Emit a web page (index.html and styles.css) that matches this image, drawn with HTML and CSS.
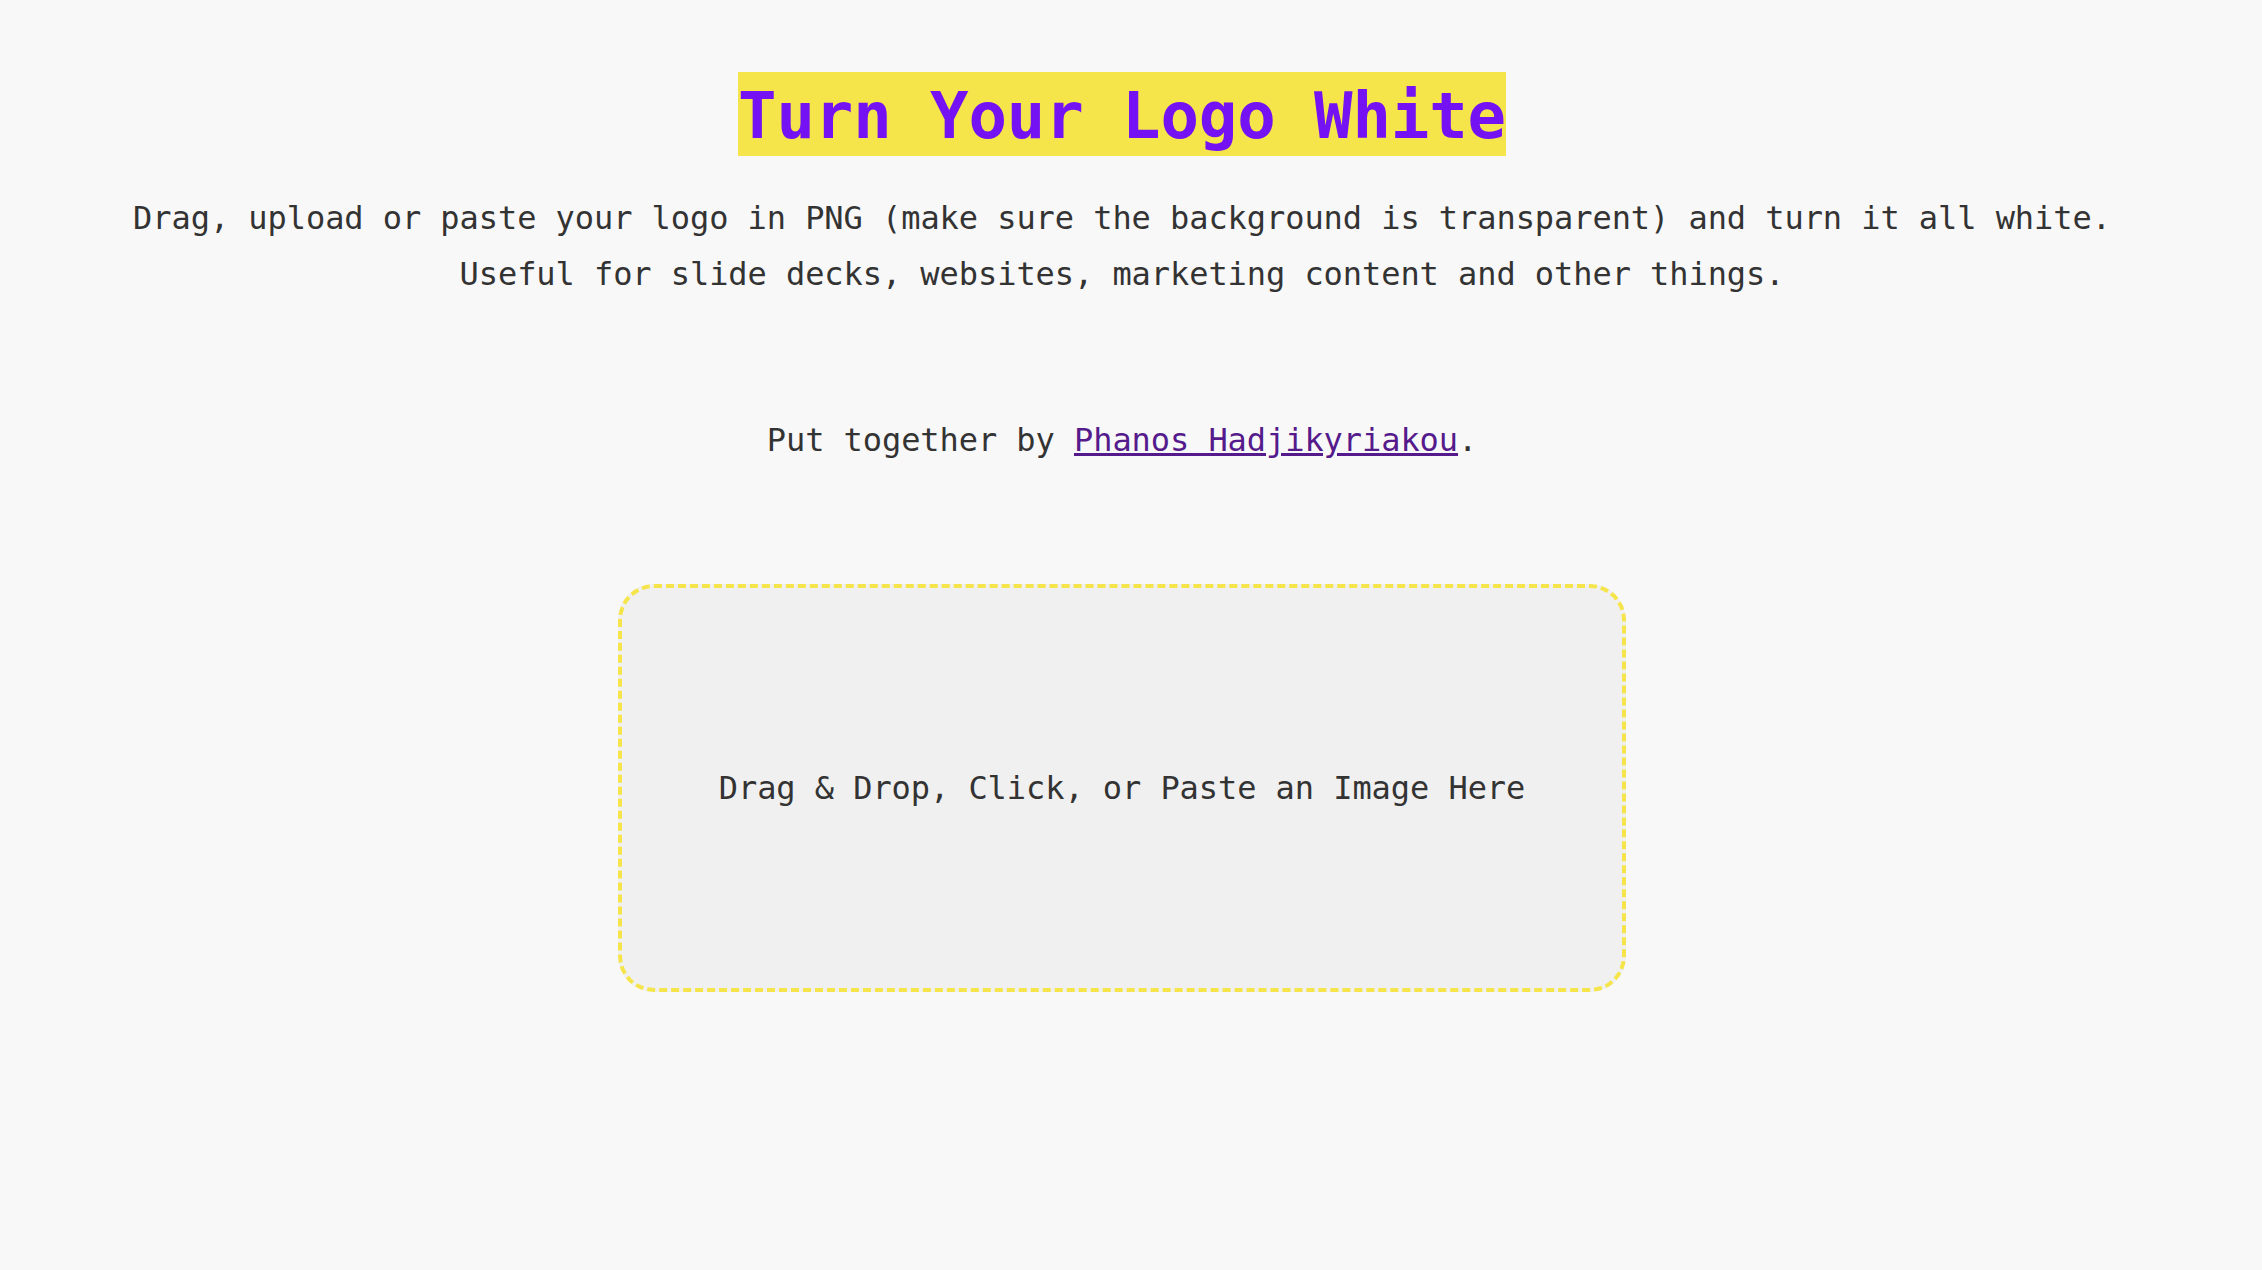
FILE: index.html
```html
<!DOCTYPE html>
<html lang="en">
<head>
<meta charset="utf-8">
<title>Turn Your Logo White</title>
<link rel="stylesheet" href="styles.css">
</head>
<body>
<main class="page">
  <h1 class="title"><span class="title-mark">Turn Your Logo White</span></h1>
  <p class="intro">Drag, upload or paste your logo in PNG (make sure the background is transparent) and turn it all white.<br>Useful for slide decks, websites, marketing content and other things.</p>
  <p class="credit">Put together by <a class="credit-link" href="#">Phanos Hadjikyriakou</a>.</p>
  <div class="dropzone">Drag &amp; Drop, Click, or Paste an Image Here</div>
</main>
</body>
</html>
```
FILE: styles.css
```css
html, body {
  margin: 0;
  padding: 0;
  background: #f8f8f8;
}

body {
  font-family: "DejaVu Sans Mono", "Liberation Mono", monospace;
  color: #333333;
  height: 1270px;
  overflow: hidden;
  letter-spacing: -0.064px;
}

.page {
  width: 2244px;
  display: flex;
  flex-direction: column;
  align-items: center;
  padding-top: 72px;
}

.title {
  margin: 0;
  font-size: 64px;
  font-weight: bold;
  line-height: 80px;
  letter-spacing: -0.13px;
}

.title-mark {
  display: inline-block;
  padding-top: 4px;
  background: #f5e54a;
  color: #7412f3;
}

.intro {
  margin: 34px 0 0;
  font-size: 32px;
  line-height: 56px;
  text-align: center;
}

.credit {
  margin: 110px 0 0;
  font-size: 32px;
  line-height: 56px;
}

.credit-link {
  color: #551a8b;
  text-decoration: underline;
}

.dropzone {
  margin-top: 116px;
  width: 1000px;
  height: 400px;
  border: 4px dashed #f5e54a;
  border-radius: 36px;
  background: #f0f0f0;
  display: flex;
  align-items: center;
  justify-content: center;
  font-size: 32px;
}
```
